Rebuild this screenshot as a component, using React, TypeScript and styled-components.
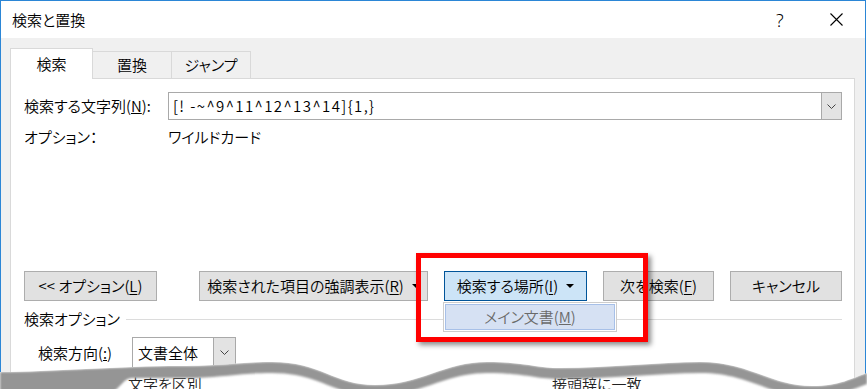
import styled, { createGlobalStyle } from 'styled-components';

const GlobalStyle = createGlobalStyle`
  html, body {
    margin: 0;
    padding: 0;
    background: #fff;
  }
  body {
    font-family: "Noto Sans CJK JP", "Noto Sans", sans-serif;
    font-feature-settings: "palt";
    font-weight: 350;
    color: #000;
  }
`;

// upper edge of the tear, page coordinates
const EDGE =
  'M0,372 C50,372 120,366 180,366 C225,366 240,362 272,362 C320,362 335,385 375,385 ' +
  'C420,385 445,362 487,362 C525,362 535,368 560,368 C610,368 660,362 700,362 ' +
  'C750,362 770,386 812,386 C840,386 852,378 867,373';

const BELOW = EDGE + ' L867,395 L0,395 Z';

const BAND =
  EDGE +
  ' L867,384 C852,389 840,397 812,397 C770,397 750,373 700,373 C660,373 610,379 560,379 ' +
  'C535,379 525,373 487,373 C445,373 420,396 375,396 C335,396 320,373 272,373 ' +
  'C240,373 225,377 196,378 L132,378 C122,378 118,394 106,394 L0,394 Z';

function Chevron() {
  return (
    <svg width="9" height="5" viewBox="0 0 9 5">
      <polyline points="0.5,0.5 4.5,4.5 8.5,0.5" fill="none" stroke="#444" strokeWidth="1" />
    </svg>
  );
}

function App() {
  return (
    <>
      <GlobalStyle />
      <Page>
        <Window>
          <TitleBar>
            <Title>検索と置換</Title>
            <Help>?</Help>
            <Close>
              <svg width="13" height="13" viewBox="0 0 13 13">
                <path d="M0.5,0.5 L12.5,12.5 M12.5,0.5 L0.5,12.5" stroke="#000" strokeWidth="1.1" />
              </svg>
            </Close>
          </TitleBar>
          <Body>
            <Tabs>
              <Tab $active $width={83}>検索</Tab>
              <Tab $width={79}>置換</Tab>
              <Tab $width={79}>ジャンプ</Tab>
            </Tabs>
            <Panel>
              <FieldRow>
                <Label>
                  検索する文字列(<u>N</u>):
                </Label>
                <Combo>
                  <ComboText>[! -~^9^11^12^13^14]{'{1,}'}</ComboText>
                  <ComboButton>
                    <Chevron />
                  </ComboButton>
                </Combo>
              </FieldRow>
              <InfoRow>
                <Label>オプション：</Label>
                <span>ワイルドカード</span>
              </InfoRow>
              <ButtonRow>
                <Button $width={133}>
                  &lt;&lt; オプション(<u>L</u>)
                </Button>
                <RightGroup>
                  <Button $width={229}>
                    検索された項目の強調表示(<u>R</u>)<Caret />
                  </Button>
                  <MenuAnchor>
                    <Button $width={143} $active>
                      検索する場所(<u>I</u>)<Caret />
                    </Button>
                    <Menu>
                      <MenuItem>
                        メイン文書(<u>M</u>)
                      </MenuItem>
                    </Menu>
                  </MenuAnchor>
                  <Button $width={111}>
                    次を検索(<u>F</u>)
                  </Button>
                  <Button $width={112}>キャンセル</Button>
                </RightGroup>
              </ButtonRow>
              <SectionRow>
                <span>検索オプション</span>
                <Rule />
              </SectionRow>
              <DirectionRow>
                <span>
                  検索方向(<u>:</u>)
                </span>
                <Select>
                  <SelectText>文書全体</SelectText>
                  <SelectButton>
                    <Chevron />
                  </SelectButton>
                </Select>
              </DirectionRow>
            </Panel>
          </Body>
        </Window>

        <Highlight />

        <Tear>
          <TearLayer viewBox="0 349 867 40" width="867" height="40">
            <path d={BELOW} fill="#fff" />
          </TearLayer>
          <Fragments>
            <span />
            <span>文字を区別</span>
            <span>接頭辞に一致</span>
          </Fragments>
          <TearLayer viewBox="0 349 867 40" width="867" height="40">
            <defs>
              <clipPath id="below-edge">
                <path d={BELOW} />
              </clipPath>
              <filter id="soft" x="-5%" y="-50%" width="110%" height="200%">
                <feGaussianBlur stdDeviation="0.9" />
              </filter>
            </defs>
            <g clipPath="url(#below-edge)">
              <path d={BAND} fill="#959595" filter="url(#soft)" />
            </g>
          </TearLayer>
        </Tear>
      </Page>
    </>
  );
}

const Page = styled.div`
  position: relative;
  width: 867px;
  height: 389px;
  overflow: hidden;
  font-size: 15px;
  line-height: 18px;
`;

const Window = styled.div`
  box-sizing: border-box;
  width: 866px;
  height: 389px;
  border: 1px solid #2b86d6;
  border-bottom: none;
  background: #f0f0f0;
  display: flex;
  flex-direction: column;
`;

const TitleBar = styled.div`
  height: 37px;
  background: #fff;
  display: flex;
  align-items: center;
  padding: 0 22px 0 11px;
`;

const Title = styled.div`
  flex: 1;
`;

const Help = styled.div`
  font-family: "Noto Sans", sans-serif;
  font-size: 18px;
  font-weight: 300;
  width: 9px;
  line-height: 18px;
`;

const Close = styled.div`
  margin-left: 45px;
  display: flex;
`;

const Body = styled.div`
  flex: 1;
  display: flex;
  flex-direction: column;
  padding: 10px 10px 0 9px;
  min-height: 0;
`;

const Tabs = styled.div`
  display: flex;
  align-items: flex-end;
  height: 30px;
`;

const Tab = styled.div<{ $active?: boolean; $width: number }>`
  box-sizing: border-box;
  width: ${(p) => p.$width}px;
  height: ${(p) => (p.$active ? 31 : 27)}px;
  margin-bottom: ${(p) => (p.$active ? -1 : 0)}px;
  position: relative;
  z-index: ${(p) => (p.$active ? 1 : 0)};
  background: ${(p) => (p.$active ? '#fff' : '#f0f0f0')};
  border: 1px solid #d9d9d9;
  border-bottom: none;
  border-left: ${(p) => (p.$active ? '1px solid #d9d9d9' : 'none')};
  display: flex;
  align-items: center;
  justify-content: center;
  padding-bottom: ${(p) => (p.$active ? 0 : 1)}px;
`;

const Panel = styled.div`
  flex: 1;
  box-sizing: border-box;
  background: #fff;
  border: 1px solid #d9d9d9;
  padding: 13px 12px 0 13px;
  min-height: 0;
`;

const FieldRow = styled.div`
  display: grid;
  grid-template-columns: 144px 1fr;
  align-items: center;
  height: 28px;
`;

const Label = styled.span`
  white-space: nowrap;
`;

const Combo = styled.div`
  box-sizing: border-box;
  height: 28px;
  border: 1px solid #a9a9a9;
  display: flex;
  align-items: stretch;
  background: #fff;
`;

const ComboText = styled.div`
  flex: 1;
  padding-left: 4px;
  display: flex;
  align-items: center;
  font-feature-settings: normal;
  letter-spacing: 1.4px;
`;

const ComboButton = styled.div`
  width: 19px;
  background: #e3e3e3;
  border-left: 1px solid #a9a9a9;
  display: flex;
  align-items: center;
  justify-content: center;
`;

const InfoRow = styled.div`
  display: grid;
  grid-template-columns: 144px 1fr;
  margin-top: 8px;
`;

const ButtonRow = styled.div`
  display: flex;
  margin-top: 125px;
  height: 30px;
`;

const RightGroup = styled.div`
  display: flex;
  gap: 16px;
  margin-left: auto;
`;

const Button = styled.div<{ $width: number; $active?: boolean }>`
  box-sizing: border-box;
  width: ${(p) => p.$width}px;
  height: 30px;
  border: 1px solid ${(p) => (p.$active ? '#005499' : '#adadad')};
  background: ${(p) => (p.$active ? '#cce4f7' : '#e1e1e1')};
  display: flex;
  align-items: center;
  justify-content: center;
  white-space: nowrap;

  u {
    text-underline-offset: 2px;
  }
`;

const Caret = styled.span`
  width: 0;
  height: 0;
  margin-left: 8px;
  border-left: 4px solid transparent;
  border-right: 4px solid transparent;
  border-top: 4px solid #000;
`;

const MenuAnchor = styled.div`
  position: relative;
`;

const Menu = styled.div`
  position: absolute;
  top: calc(100% + 1px);
  left: -1px;
  width: 174px;
  height: 30px;
  box-sizing: border-box;
  border: 1px solid #cdcdcd;
  background: #fff;
  padding: 1px;
`;

const MenuItem = styled.div`
  box-sizing: border-box;
  height: 100%;
  background: #d6e1f3;
  border: 1px solid #a7c0e8;
  color: #6a6a6a;
  display: flex;
  align-items: center;
  justify-content: center;
`;

const SectionRow = styled.div`
  display: flex;
  align-items: center;
  margin-top: 9px;
  height: 18px;
`;

const Rule = styled.div`
  flex: 1;
  height: 1px;
  margin-left: 6px;
  background: #dcdcdc;
`;

const DirectionRow = styled.div`
  display: grid;
  grid-template-columns: 94px 104px;
  align-items: center;
  margin-top: 9px;
  padding-left: 14px;
`;

const Select = styled.div`
  box-sizing: border-box;
  height: 31px;
  border: 1px solid #a9a9a9;
  display: flex;
  background: #fff;
`;

const SelectText = styled.div`
  flex: 1;
  padding-left: 5px;
  display: flex;
  align-items: center;
`;

const SelectButton = styled.div`
  width: 21px;
  background: #e3e3e3;
  border-left: 1px solid #a9a9a9;
  display: flex;
  align-items: center;
  justify-content: center;
`;

const Highlight = styled.div`
  position: absolute;
  left: 416px;
  top: 253px;
  width: 232px;
  height: 89px;
  box-sizing: border-box;
  border: 5px solid #ff0000;
  box-shadow: 3px 3px 5px rgba(0, 0, 0, 0.45);
`;

const Tear = styled.div`
  position: absolute;
  left: 0;
  bottom: 0;
  width: 867px;
  height: 40px;
`;

const TearLayer = styled.svg`
  position: absolute;
  left: 0;
  top: 0;
  display: block;
`;

const Fragments = styled.div`
  position: relative;
  display: grid;
  grid-template-columns: 128px 424px 1fr;
  padding-top: 27px;
  line-height: 15px;
  color: #222;
  white-space: nowrap;
`;

export default App;
